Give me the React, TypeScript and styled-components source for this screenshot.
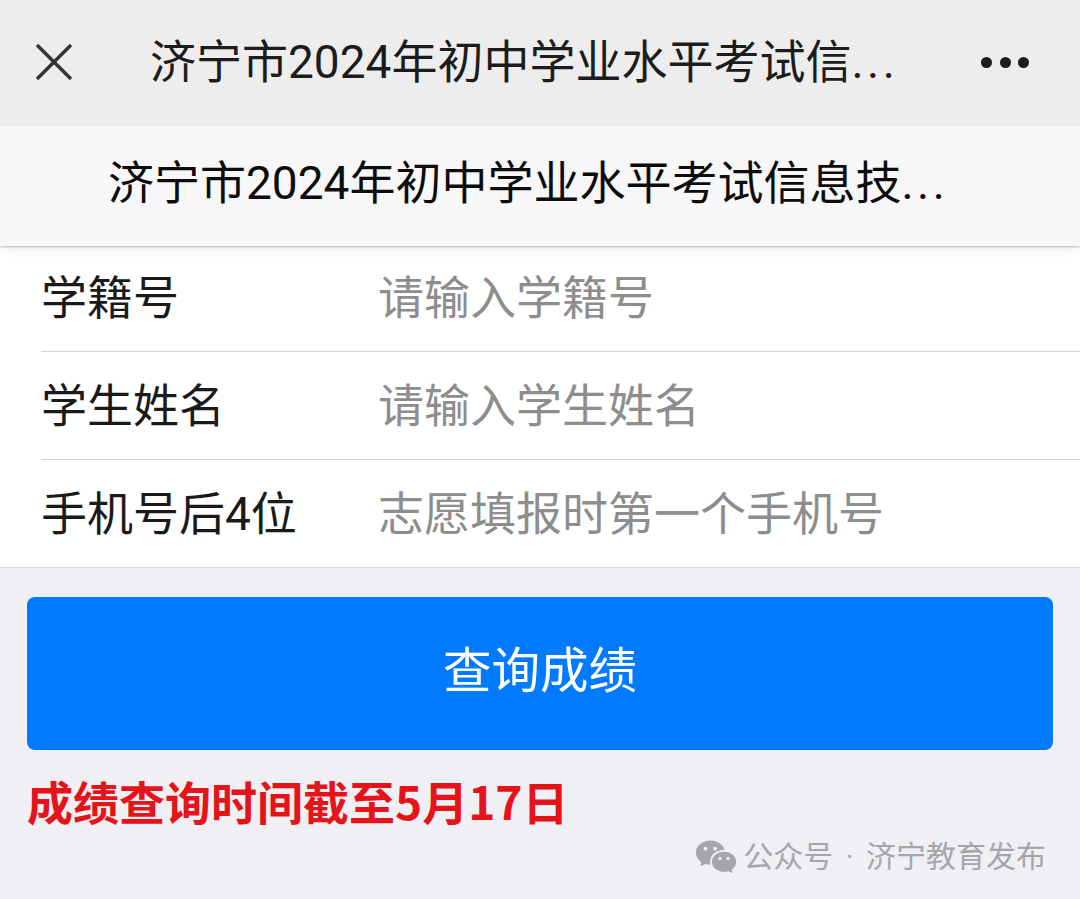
import React from 'react';
import styled, { createGlobalStyle } from 'styled-components';
import { RiWechatFill } from 'react-icons/ri';

const GlobalStyle = createGlobalStyle`
  html, body {
    margin: 0;
    padding: 0;
    background-color: #efeff4;
  }
  * {
    box-sizing: border-box;
  }
  body {
    font-family: "Roboto", "Noto Sans CJK SC", sans-serif;
  }
`;

const Page = styled.div`
  position: relative;
  width: 1080px;
  height: 899px;
  overflow: hidden;
  background-color: #efeff4;
`;

const TopBar = styled.header`
  display: flex;
  align-items: center;
  height: 126px;
  padding: 0 51px 2px 35px;
  background-color: #ededed;
`;

const CloseButton = styled.button`
  display: flex;
  width: 38px;
  height: 38px;
  padding: 0;
  border: none;
  background: none;
  margin-right: 77px;
`;

const TopTitle = styled.h1`
  flex: 1;
  margin: 0;
  font-size: 46px;
  font-weight: 400;
  line-height: 60px;
  color: #1c1c1c;
  white-space: nowrap;
`;

const Ellipsis = styled.span`
  letter-spacing: 3.5px;
`;

const MoreButton = styled.button`
  display: flex;
  gap: 7.5px;
  padding: 0;
  border: none;
  background: none;
`;

const Dot = styled.span`
  width: 11px;
  height: 11px;
  border-radius: 50%;
  background-color: #1c1c1c;
`;

const SubBar = styled.div`
  position: relative;
  z-index: 1;
  display: flex;
  align-items: center;
  height: 120px;
  padding: 0 0 6px 108px;
  background-color: #f7f7f7;
  box-shadow: 0 1px 2px rgba(0, 0, 0, 0.25), 0 4px 10px rgba(0, 0, 0, 0.06);
`;

const SubTitle = styled.h2`
  margin: 0;
  font-size: 46px;
  font-weight: 400;
  line-height: 60px;
  color: #0c0c0c;
  white-space: nowrap;
`;

const Form = styled.section`
  margin-top: -2px;
  padding-left: 41px;
  background-color: #fff;
  border-bottom: 1px solid #d6d6d8;
`;

const Row = styled.div`
  display: flex;
  align-items: center;
  height: 108px;
  padding-bottom: 8px;
  border-bottom: 1px solid #d2d2d4;
  &:last-child {
    border-bottom: none;
    height: 107px;
  }
`;

const Label = styled.span`
  width: 337px;
  font-size: 46px;
  color: #1a1a1a;
`;

const Placeholder = styled.span`
  font-size: 46px;
  color: #8d8d8d;
`;

const Actions = styled.div`
  padding: 29px 27px 0;
`;

const SubmitButton = styled.button`
  display: block;
  width: 100%;
  height: 153px;
  padding: 0 0 14px;
  border: none;
  border-radius: 8px;
  background-color: #007aff;
  color: #fff;
  font-family: inherit;
  font-size: 48.5px;
`;

const Notice = styled.p`
  margin: 23px 0 0;
  font-family: "Noto Sans CJK SC", sans-serif;
  font-size: 46px;
  font-weight: 700;
  line-height: 54px;
  color: #e5141a;
`;

const Watermark = styled.div`
  position: absolute;
  right: 34px;
  bottom: 20px;
  display: flex;
  align-items: center;
  gap: 5px;
  font-size: 30px;
  line-height: 40px;
  word-spacing: 5px;
  color: #a6a6aa;
`;

const topTitle = '济宁市2024年初中学业水平考试信';
const subTitle = '济宁市2024年初中学业水平考试信息技';

const rows = [
  { label: '学籍号', placeholder: '请输入学籍号' },
  { label: '学生姓名', placeholder: '请输入学生姓名' },
  { label: '手机号后4位', placeholder: '志愿填报时第一个手机号' },
];

const App: React.FC = () => {
  return (
    <Page>
      <GlobalStyle />
      <TopBar>
        <CloseButton aria-label="close">
          <svg width="38" height="38" viewBox="0 0 38 38">
            <path d="M2 2 L36 36 M36 2 L2 36" stroke="#333" strokeWidth="3.4" fill="none" />
          </svg>
        </CloseButton>
        <TopTitle>
          {topTitle}
          <Ellipsis>...</Ellipsis>
        </TopTitle>
        <MoreButton aria-label="more">
          <Dot />
          <Dot />
          <Dot />
        </MoreButton>
      </TopBar>
      <SubBar>
        <SubTitle>
          {subTitle}
          <Ellipsis>...</Ellipsis>
        </SubTitle>
      </SubBar>
      <Form>
        {rows.map((row) => (
          <Row key={row.label}>
            <Label>{row.label}</Label>
            <Placeholder>{row.placeholder}</Placeholder>
          </Row>
        ))}
      </Form>
      <Actions>
        <SubmitButton>查询成绩</SubmitButton>
        <Notice>成绩查询时间截至5月17日</Notice>
      </Actions>
      <Watermark>
        <RiWechatFill size={44} color="#a6a6aa" />
        公众号 · 济宁教育发布
      </Watermark>
    </Page>
  );
};

export default App;
